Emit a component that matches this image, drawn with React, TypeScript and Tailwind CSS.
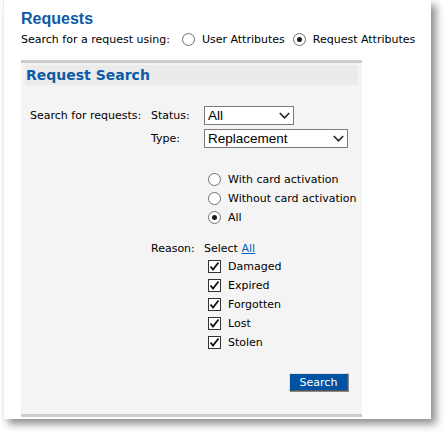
import React from "react"

const body = { fontFamily: '"DejaVu Sans", Verdana, sans-serif' }
const arial = { fontFamily: '"Liberation Sans", Arial, sans-serif' }

function Radio({ checked }: { checked?: boolean }) {
  return (
    <span className="w-[13px] h-[13px] rounded-full border border-[#707070] bg-white flex items-center justify-center shrink-0">
      {checked && <span className="w-[5px] h-[5px] rounded-full bg-[#1a1a1a]" />}
    </span>
  )
}

function Check() {
  return (
    <span className="w-[13px] h-[13px] border border-[#333] bg-white flex items-center justify-center shrink-0">
      <svg width="11" height="11" viewBox="0 0 11 11">
        <polyline points="1.5,5.5 4,8.5 9.5,1.5" fill="none" stroke="#111" strokeWidth="1.8" />
      </svg>
    </span>
  )
}

function Select({ value, width }: { value: string; width: string }) {
  return (
    <div
      className={`${width} h-[19px] border border-[#7a7a7a] bg-white flex items-center justify-between pl-[3px] pr-[3px] text-[13.5px] text-black leading-none`}
      style={arial}
    >
      <span>{value}</span>
      <svg width="11" height="7" viewBox="0 0 11 7">
        <polyline points="0.8,1 5.5,5.8 10.2,1" fill="none" stroke="#222" strokeWidth="1.6" />
      </svg>
    </div>
  )
}

const activation = [
  { label: "With card activation", checked: false },
  { label: "Without card activation", checked: false },
  { label: "All", checked: true },
]

const reasons = ["Damaged", "Expired", "Forgotten", "Lost", "Stolen"]

export default function App() {
  return (
    <div className="w-[447px] h-[435px] bg-white text-[11px] text-black" style={body}>
      <div className="ml-[3px] w-[428px] h-[419px] bg-white border-l border-[#ececec] shadow-[5px_5px_8px_rgba(0,0,0,0.45)] pl-[17px] pt-[10px] flex flex-col">
        <h1 className="text-[16px] leading-[18px] font-bold text-[#0b5ba8]" style={arial}>
          Requests
        </h1>
        <div className="flex items-center mt-[5px] h-[13px] leading-[13px]">
          <span>Search for a request using:</span>
          <span className="ml-[12px]"><Radio /></span>
          <span className="ml-[7px]">User Attributes</span>
          <span className="ml-[8px]"><Radio checked /></span>
          <span className="ml-[7px]">Request Attributes</span>
        </div>

        {/* panel */}
        <div className="mt-[14px] w-[341px] bg-[#f4f4f4] border-t-[3px] border-b-[3px] border-[#cccccc] flex flex-col">
          <div className="mt-[2px] mx-[4px] h-[20px] bg-[#ebebeb] pl-[1px] text-[14px] leading-[20px] font-bold text-[#0b5ba8]">
            Request Search
          </div>

          <div className="pl-[9px] pt-[21px] grid grid-cols-[121px_53px_auto] items-center">
            <span className="leading-[13px]">Search for requests:</span>
            <span className="leading-[13px]">Status:</span>
            <Select value="All" width="w-[90px]" />

            <span />
            <span className="leading-[13px] mt-[4px]">Type:</span>
            <div className="mt-[4px]">
              <Select value="Replacement" width="w-[144px]" />
            </div>
          </div>

          <div className="pl-[187px] pt-[22px] flex flex-col">
            {activation.map((a) => (
              <div key={a.label} className="h-[19px] flex items-center gap-[7px] leading-[13px]">
                <Radio checked={a.checked} />
                <span>{a.label}</span>
              </div>
            ))}
          </div>

          <div className="pl-[9px] pt-[12px] grid grid-cols-[121px_53px_auto] items-center h-[30px]">
            <span />
            <span className="leading-[13px] self-end mb-[2px]">Reason:</span>
            <span className="leading-[13px] self-end mb-[2px]">
              Select <span className="text-[#0563c1] underline">All</span>
            </span>
          </div>

          <div className="pl-[187px] flex flex-col">
            {reasons.map((r) => (
              <div key={r} className="h-[19px] flex items-center gap-[7px] leading-[13px]">
                <Check />
                <span>{r}</span>
              </div>
            ))}
          </div>

          <div className="flex justify-end pr-[14px] pt-[21px] pb-[23px]">
            <button className="w-[59px] h-[18px] bg-[#0052a3] text-white text-[11px] leading-none border border-t-[#e0e0e0] border-l-[#e0e0e0] border-r-[#555] border-b-[#555] shadow-[1px_1px_0_#888]">
              Search
            </button>
          </div>
        </div>
      </div>
    </div>
  )
}
